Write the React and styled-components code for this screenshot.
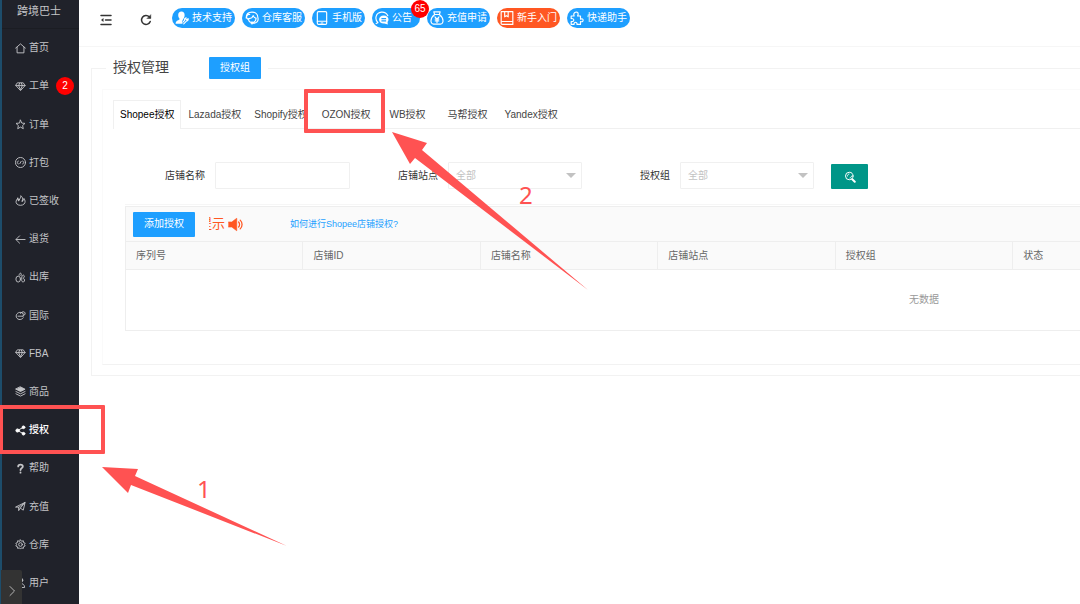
import styled, { createGlobalStyle } from 'styled-components';

const GlobalStyle = createGlobalStyle`
  * {
    box-sizing: border-box;
  }

  body {
    margin: 0;
    background: #ffffff;
    color: #333333;
    font: 10px/16px 'Liberation Sans', 'Noto Sans CJK SC', sans-serif;
  }

  button,
  input,
  select {
    font: inherit;
  }
`;

const outline = {
  fill: 'none',
  stroke: 'currentColor',
  strokeLinecap: 'round',
  strokeLinejoin: 'round',
};

const icons = {
  home: <path d="M1.500 11 12 2l10.500 9M4.500 9.500V21.500h15V9.500" />,
  gem: <path d="M6 4h12l4 6-10 11L2 10zM2 10h20M8 10l4 9 4-9M8 10l2-5M16 10l-2-5" />,
  star: <path d="m12 2.500 2.800 6.400 7 .7-5.200 4.700 1.500 6.900L12 17.600l-6.100 3.600 1.500-6.900-5.200-4.700 7-.7z" />,
  pack: (
    <>
      <circle cx="12" cy="12" r="11" />
      <path d="m7.500 9-3.500 3 3.500 3M16.500 9l3.500 3-3.500 3M10.500 14.500l3-5" />
    </>
  ),
  fire: (
    <>
      <path d="M6 7C2 11 1 16 4 19.500c4 4 12 4 16 0 3-3.500 2.500-8-.5-12-.5 2-1 3-2.500 4C17.500 8 16 4 12.500 1.500c.5 3.500-1 5.500-3 8.500" />
      <path d="M6 7c0 2 .5 3.500 2 5 0-1 .5-1.500 1.500-2M17 11.500c-.3 1-.7 1.500-1.500 2" strokeWidth="3" />
    </>
  ),
  back: <path d="M22 12H2.500M10 4l-8 8 8 8" />,
  out: (
    <>
      <ellipse cx="7" cy="15.500" rx="5" ry="6.500" />
      <path d="M9 7c0-2.500 1.500-4.500 3-4.500S14.500 5 13 8M15 10c1-3.500 4-4 5-2s-.5 4-2 5.500c3 1 4 7 1 8s-5-1.500-4.500-4z" />
    </>
  ),
  globe: (
    <>
      <path d="M17 7C12 2.500 3 6 2.500 13c0 8 11 11 15.500 4" />
      <path d="M6.500 13.500h11c5-3 6-7 3-9s-7 1-9 3" />
      <path d="M17.500 13.500c1.500-2 1-4.500-.5-6.500" />
    </>
  ),
  layers: (
    <g fill="currentColor">
      <path d="m12 2 10 5-10 5L2 7z" />
      <path d="m2 12 10 5 10-5M2 17l10 5 10-5" fill="none" />
    </g>
  ),
  share: (
    <g fill="currentColor">
      <circle cx="5.500" cy="12" r="3.500" />
      <circle cx="18.500" cy="5" r="3" />
      <circle cx="18.500" cy="19" r="3" />
      <path d="m18.500 5-13 7 13 7" fill="none" />
    </g>
  ),
  help: (
    <>
      <path d="M7 7.500C7 2 17 2 17 7.500c0 3.500-5 4-5 8" strokeWidth="4" />
      <path d="M12 20.500v.5" strokeWidth="4" />
    </>
  ),
  send: <path d="M2 13 22 3l-4 17-6.500-4.500L8 21v-7zM8 14l14-11-10.500 12.500" />,
  gear: (
    <>
      <circle cx="12" cy="12" r="4" />
      <path d="m12 2 2.500 3 3.700-1.200.4 3.900 3.600 1.500L20.500 12l1.700 3.300-3.600 1.500-.4 3.700-3.700-1.200L12 22l-2.500-2.700-3.700 1.200-.4-3.700-3.600-1.500L3.500 12 1.800 9.200l3.600-1.500.4-3.900L9.500 5z" />
    </>
  ),
  user: (
    <>
      <circle cx="12" cy="7" r="5" />
      <path d="M3 22c0-11 18-11 18 0z" />
    </>
  ),
  fold: (
    <>
      <path d="M2 3h20M11 12h11M2 21h20" />
      <path d="m7 8-5 4 5 4z" fill="currentColor" strokeWidth="0" />
    </>
  ),
  refresh: (
    <>
      <path d="M20.500 15A9 9 0 1 1 18.500 5.500L20 7" />
      <path d="M21.500 2v7H14.500z" fill="currentColor" strokeWidth="1" />
    </>
  ),
  engineer: (
    <>
      <path
        d="M11 1C7.500 1 5.500 3.500 5.500 7c0 3 1 5 2.500 6.500C7.500 16 1 15.500 1 22h12l-1-4 2-4c1.500-1.500 2.500-4 2.500-7 0-3.500-2-6-5.500-6z"
        fill="currentColor"
        strokeWidth="0"
      />
      <path d="m15 22 5-5c2 0 3-2 2.500-4l-2 2-2-1 .5-2.500c-2.500.5-3 3-2.500 4.500L13.500 19" />
    </>
  ),
  headset: (
    <>
      <path d="M2 12C2 6 6 2 12 2s10 4 10 9M5 14c-5-3-1-9 3-8M7 13c3 0 6-2 7-5 1 3 3 4 5 4M6 13c0 9 12 9 13 0M22 11c2 7-3 10-8 10" />
      <circle cx="12" cy="20.500" r="1.500" />
    </>
  ),
  phone: (
    <>
      <rect x="4" y="1" width="16" height="22" rx="2" />
      <path d="M4 17.500h16M10.500 20.500h3" />
    </>
  ),
  chat: (
    <>
      <path d="M5 20C-1 14 1 3 11 2c6-.5 9 2 11 6M5 20l-3 1.500" />
      <path
        fill="currentColor"
        fillRule="evenodd"
        strokeWidth="0"
        d="M15 7.500c-5 0-8 3-8 7 0 5 4 7.500 9 7l6 1.500-.5-4c4-5 .5-11.500-6.500-11.500zm-4 4.500h8v2h-8zm0 4h8v2h-8z"
      />
    </>
  ),
  money: (
    <>
      <path d="M8 6 6.500 1.500h11L16 6M8 6h8c5 4 7 9 6 13-.5 2-1.500 3.500-4 3.500H6c-2.500 0-3.500-1.500-4-3.500C1 15 3 10 8 6z" />
      <path d="m8.500 10 3.500 4 3.500-4M12 14v6M9 14h6M9 17h6" />
    </>
  ),
  book: <path d="M2 1h20v22H4c-3 0-3-5 0-5h18M2 1v20M8 1v9l3-2 3 2V1" />,
  puzzle: (
    <path d="M7 8.500C4 2 14-.5 14 5c0 1.500-.5 2.500-1 3.500h5V14c6-2.500 6 6.500 0 4v5h-6c1-5-6-5-5 0H2v-5c6 1 6-6 0-5V8.500z" />
  ),
  search: (
    <>
      <circle cx="10.500" cy="10" r="7.500" />
      <path d="M7 10c0-2 1-3.500 3-4M12 14c2-.5 3-2 3-3.500" />
      <path d="m16.500 16.500 5 5" strokeWidth="4" />
    </>
  ),
  speaker: (
    <>
      <path d="M1 8h5l8-6v20l-8-6H1z" fill="currentColor" strokeWidth="1" />
      <path d="M17 8c2 2 2 6 0 8M19.500 5c4 4 4 10 0 14" />
    </>
  ),
  chevron: <path d="m8 3 9 9-9 9" />,
};

function Icon({ name, size = 11, weight = 2 }) {
  return (
    <svg width={size} height={size} viewBox="0 0 24 24" strokeWidth={weight} aria-hidden="true" {...outline}>
      {icons[name]}
    </svg>
  );
}

const menu = [
  { icon: 'home', label: '首页' },
  { icon: 'gem', label: '工单', count: 2 },
  { icon: 'star', label: '订单' },
  { icon: 'pack', label: '打包' },
  { icon: 'fire', label: '已签收' },
  { icon: 'back', label: '退货' },
  { icon: 'out', label: '出库' },
  { icon: 'globe', label: '国际' },
  { icon: 'gem', label: 'FBA' },
  { icon: 'layers', label: '商品' },
  { icon: 'share', label: '授权', active: true },
  { icon: 'help', label: '帮助' },
  { icon: 'send', label: '充值' },
  { icon: 'gear', label: '仓库' },
  { icon: 'user', label: '用户' },
];

const shortcuts = [
  { icon: 'engineer', label: '技术支持' },
  { icon: 'headset', label: '仓库客服' },
  { icon: 'phone', label: '手机版' },
  { icon: 'chat', label: '公告', count: 65 },
  { icon: 'money', label: '充值申请' },
  { icon: 'book', label: '新手入门', warm: true },
  { icon: 'puzzle', label: '快递助手' },
];

const tabs = ['Shopee授权', 'Lazada授权', 'Shopify授权', 'OZON授权', 'WB授权', '马帮授权', 'Yandex授权'];
const columns = ['序列号', '店铺ID', '店铺名称', '店铺站点', '授权组', '状态'];

export default function App() {
  return (
    <Page>
      <GlobalStyle />
      <Sidebar>
        <Brand>跨境巴士</Brand>
        <Menu>
          {menu.map((item) => (
            <MenuLink key={item.label} href="#" $active={item.active}>
              <Icon name={item.icon} />
              {item.label}
              {item.count && <MenuBadge>{item.count}</MenuBadge>}
            </MenuLink>
          ))}
        </Menu>
        <Expander type="button" aria-label="展开">
          <Icon name="chevron" size={12} />
        </Expander>
      </Sidebar>

      <Main>
        <Topbar>
          <IconButton type="button" aria-label="菜单">
            <Icon name="fold" size={12} weight={3} />
          </IconButton>
          <IconButton type="button" aria-label="刷新">
            <Icon name="refresh" size={12} weight={3} />
          </IconButton>
          <Shortcuts>
            {shortcuts.map((item) => (
              <Shortcut key={item.label} type="button" $warm={item.warm}>
                <Icon name={item.icon} size={14} />
                {item.label}
                {item.count && <ShortcutBadge>{item.count}</ShortcutBadge>}
              </Shortcut>
            ))}
          </Shortcuts>
        </Topbar>

        <Panel>
          <PanelLegend>
            <PanelTitle>
              <Heading>授权管理</Heading>
              <Button type="button">授权组</Button>
            </PanelTitle>
          </PanelLegend>
          <Card>
            <TabList role="tablist">
              {tabs.map((tab, i) => (
                <Tab key={tab} type="button" role="tab" aria-selected={i === 0}>
                  {tab}
                </Tab>
              ))}
            </TabList>

            <Filters>
              <Label htmlFor="shop-name">店铺名称</Label>
              <Input id="shop-name" type="text" />
              <Label htmlFor="shop-site">店铺站点</Label>
              <SelectBox>
                <Select id="shop-site">
                  <option>全部</option>
                </Select>
              </SelectBox>
              <Label htmlFor="auth-group">授权组</Label>
              <SelectBox>
                <Select id="auth-group">
                  <option>全部</option>
                </Select>
              </SelectBox>
              <SearchButton type="button" aria-label="搜索">
                <Icon name="search" size={12} />
              </SearchButton>
            </Filters>

            <TableArea>
              <Toolbar>
                <Button type="button" $large>添加授权</Button>
                <Notice>
                  <NoticeText>提示</NoticeText>
                  <Icon name="speaker" size={15} />
                </Notice>
                <HelpLink href="#">如何进行Shopee店铺授权?</HelpLink>
              </Toolbar>
              <Table>
                <thead>
                  <tr>
                    {columns.map((column) => (
                      <th key={column}>{column}</th>
                    ))}
                    <th colSpan={3} />
                  </tr>
                </thead>
                <tbody>
                  <tr>
                    <td colSpan={9}>无数据</td>
                  </tr>
                </tbody>
              </Table>
            </TableArea>
          </Card>
        </Panel>
      </Main>

      <MenuFrame />
      <TabFrame />
      <Arrows width="600" height="560" viewBox="0 0 600 560" aria-hidden="true">
        <path d="m102 467 36 2-3 7 152 70-156-61-3 8z" />
        <path d="m392 132 35 11-5 7 166 140-173-132-5 6z" />
      </Arrows>
      <Step $left={197} $top={472}>1</Step>
      <Step $left={519} $top={178}>2</Step>
    </Page>
  );
}

const Page = styled.div`
  position: relative;
  display: grid;
  grid-template-columns: 79px minmax(0, 1fr);
  min-height: 100vh;
  overflow: hidden;
`;

const Sidebar = styled.aside`
  position: relative;
  display: flex;
  flex-direction: column;
  padding-bottom: 2px;
  border-left: 2px solid #1d4d6b;
  background: #20222a;
  color: #c4c5c8;
`;

const Brand = styled.div`
  height: 29px;
  padding-left: 15px;
  border-bottom: 1px solid #1b1d23;
  font-size: 11px;
  line-height: 22px;
`;

const Menu = styled.nav`
  display: flex;
  flex: 1;
  flex-direction: column;
`;

const MenuLink = styled.a`
  display: flex;
  flex: 1;
  align-items: center;
  gap: 3px;
  padding-left: 13px;
  color: ${({ $active }) => ($active ? '#ffffff' : 'inherit')};
  font-weight: ${({ $active }) => ($active ? 500 : 400)};
  text-decoration: none;
`;

const MenuBadge = styled.span`
  width: 18px;
  height: 18px;
  margin-left: 4px;
  border-radius: 50%;
  background: #ff0000;
  color: #ffffff;
  line-height: 18px;
  text-align: center;
`;

const Expander = styled.button`
  position: absolute;
  bottom: 0;
  left: -1px;
  display: flex;
  align-items: center;
  justify-content: center;
  width: 21px;
  height: 34px;
  padding: 8px 0 0;
  border: 0;
  border-radius: 0 2px 0 0;
  background: #333333;
  color: #b5b5b5;
`;

const Main = styled.main`
  overflow: hidden;
`;

const Topbar = styled.header`
  display: flex;
  align-items: flex-start;
  height: 47px;
  padding: 8px 0 0 21px;
  border-bottom: 1px solid #f6f6f6;
`;

const IconButton = styled.button`
  display: flex;
  align-items: center;
  width: 12px;
  height: 24px;
  margin-right: 28px;
  padding: 0;
  border: 0;
  background: none;
  color: #333333;

  & + & {
    margin-right: 20px;
  }
`;

const Shortcuts = styled.div`
  display: flex;
  gap: 7px;
`;

const Shortcut = styled.button`
  position: relative;
  display: flex;
  align-items: center;
  gap: 3px;
  min-width: 48px;
  height: 20px;
  padding: 0 3px;
  border: 0;
  border-radius: 10px;
  background: ${({ $warm }) => ($warm ? '#ff5722' : '#1e9fff')};
  color: #ffffff;
  white-space: nowrap;
`;

const ShortcutBadge = styled.span`
  position: absolute;
  top: -8px;
  right: -9px;
  z-index: 1;
  width: 18px;
  height: 18px;
  border-radius: 50%;
  background: #ff0000;
  line-height: 18px;
  text-align: center;
`;

const Panel = styled.fieldset`
  min-width: 1664px;
  margin: 10px 0 0 12px;
  padding: 10px;
  border: 1px solid #f2f2f2;
`;

const PanelLegend = styled.legend`
  margin-left: 4px;
  padding: 0 7px;
`;

const PanelTitle = styled.div`
  display: flex;
  align-items: flex-start;
  gap: 40px;
  height: 22px;
`;

const Heading = styled.span`
  color: #444444;
  font-size: 14px;
  line-height: 20px;
`;

const Button = styled.button`
  height: ${({ $large }) => ($large ? 25 : 22)}px;
  padding: 0 11px;
  border: 0;
  border-radius: 1px;
  background: #1e9fff;
  color: #ffffff;
`;

const Card = styled.div`
  padding: 10px 10px 33px;
  border: 1px solid #fafafa;
  border-bottom-color: #f2f2f2;
`;

const TabList = styled.div`
  display: flex;
  height: 29px;
  border-bottom: 1px solid #f0f0f0;
`;

const Tab = styled.button`
  min-width: 60px;
  height: 29px;
  padding: 0 6px;
  border: 0;
  background: none;
  color: #444444;
  white-space: nowrap;

  &[aria-selected='true'] {
    margin-right: 1px;
    border: 1px solid #f0f0f0;
    border-bottom: 0;
    background: #ffffff;
    color: #000000;
  }

  &:nth-child(n + 3) {
    padding: 0 7px;
  }
`;

const Filters = styled.div`
  display: flex;
  align-items: center;
  height: 27px;
  margin: 33px 0 15px 4px;
`;

const Label = styled.label`
  width: 98px;
  padding-right: 10px;
  text-align: right;
`;

const Input = styled.input`
  width: 135px;
  height: 27px;
  padding: 0 7px;
  border: 1px solid #f0f0f0;
  border-radius: 1px;
  outline: 0;
`;

const SelectBox = styled.div`
  position: relative;
  width: 134px;

  &::after {
    position: absolute;
    top: 11px;
    right: 6px;
    border: 5px solid transparent;
    border-top-color: #c2c2c2;
    border-bottom: 0;
    content: '';
    pointer-events: none;
  }
`;

const Select = styled.select`
  width: 100%;
  height: 27px;
  padding: 0 7px;
  border: 1px solid #f0f0f0;
  border-radius: 1px;
  appearance: none;
  background: #ffffff;
  color: #c2c2c2;
`;

const SearchButton = styled.button`
  display: flex;
  align-items: center;
  justify-content: center;
  width: 37px;
  height: 25px;
  margin: 2px 0 0 17px;
  padding: 0;
  border: 0;
  border-radius: 1px;
  background: #009688;
  color: #ffffff;
`;

const TableArea = styled.section`
  margin: 0 10px 0 12px;
  padding-top: 1px;
  border-top: 1px solid #f6f6f6;
`;

const Toolbar = styled.div`
  display: flex;
  align-items: center;
  height: 35px;
  padding-left: 7px;
  border: 1px solid #eeeeee;
  border-bottom: 0;
  background: #fafafa;
`;

const Notice = styled.div`
  display: flex;
  align-items: center;
  gap: 3px;
  margin-left: 14px;
  color: #ff5722;
`;

const NoticeText = styled.span`
  display: flex;
  justify-content: flex-end;
  width: 16px;
  overflow: hidden;
  font-size: 13px;
  white-space: nowrap;
`;

const HelpLink = styled.a`
  margin-left: 47px;
  color: #1e9fff;
  font-size: 9px;
  text-decoration: none;
`;

const Table = styled.table`
  width: 100%;
  border-collapse: collapse;
  table-layout: fixed;

  th {
    height: 28px;
    padding: 0 10px;
    border: 1px solid #eeeeee;
    background: #fafafa;
    color: #666666;
    font-weight: 400;
    text-align: left;
  }

  td {
    height: 61px;
    padding: 0;
    border: 1px solid #eeeeee;
    color: #999999;
    text-align: center;
  }
`;

const Frame = styled.div`
  position: absolute;
  border: 4px solid #ff5252;
  border-radius: 1px;
  pointer-events: none;
`;

const MenuFrame = styled(Frame)`
  top: 405px;
  left: -1px;
  width: 106px;
  height: 49px;
`;

const TabFrame = styled(Frame)`
  top: 89px;
  left: 304px;
  width: 81px;
  height: 44px;
`;

const Arrows = styled.svg`
  position: absolute;
  top: 0;
  left: 0;
  fill: #ff5252;
  pointer-events: none;
`;

const Step = styled.span`
  position: absolute;
  top: ${({ $top }) => $top}px;
  left: ${({ $left }) => $left}px;
  color: #ff5252;
  font: 24px/34px 'Noto Sans', sans-serif;
`;
